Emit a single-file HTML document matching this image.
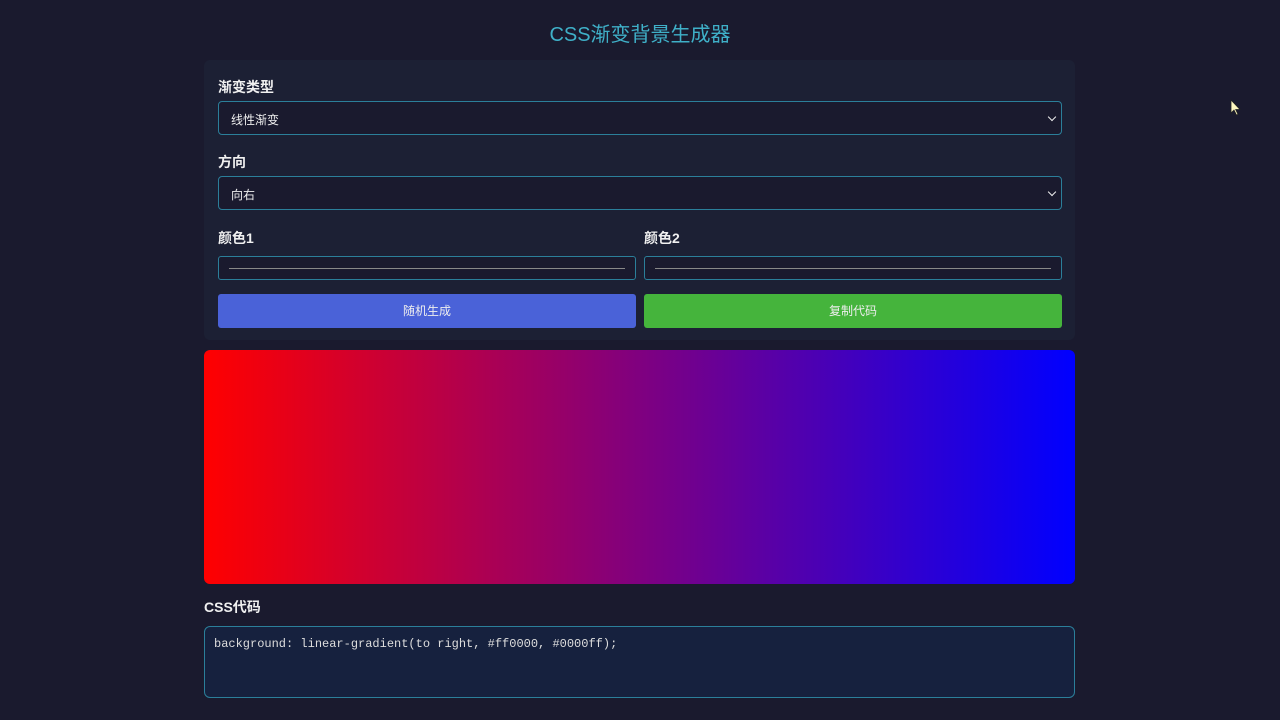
<!DOCTYPE html>
<html><head><meta charset="utf-8"><style>
*{box-sizing:border-box;margin:0;padding:0}
body{width:1280px;height:720px;background:#1a1a2e;font-family:"Liberation Sans","Noto Sans CJK SC",sans-serif;color:#e8e8e8;position:relative;overflow:hidden}
h1{position:absolute;top:18px;width:100%;text-align:center;font-size:20px;font-weight:normal;color:#3fb0c8}
.panel{position:absolute;left:204px;top:60px;width:871px;height:280px;background:#1c2034;border-radius:6px}
.lbl{position:absolute;font-size:14px;color:#f0f0f0;font-weight:bold}
.sel{position:absolute;left:218px;width:844px;height:34px;border:1px solid #2b7f9a;border-radius:4px;background:#1a1a2e;font-size:12px;padding:9px 12px;color:#eee}
.sel:after{content:"";position:absolute;right:6px;top:12px;width:5px;height:5px;border-right:1.5px solid #eee;border-bottom:1.5px solid #eee;transform:rotate(45deg)}
.ci{position:absolute;top:256px;width:418px;height:24px;border:1px solid #2b7f9a;border-radius:3px;background:#1a1a2e}
.ci:after{content:"";position:absolute;left:10px;right:10px;top:11px;height:1px;background:#888}
.btn{position:absolute;top:294px;width:418px;height:34px;border-radius:3px;font-size:12px;text-align:center;line-height:34px;color:#eee}
.prev{position:absolute;left:204px;top:350px;width:871px;height:234px;border-radius:6px;background:linear-gradient(to right,#ff0000,#0000ff)}
.code{position:absolute;left:204px;top:626px;width:871px;height:72px;border:1px solid #2b7f9a;border-radius:6px;background:#16213e;font-family:"Liberation Mono",monospace;font-size:12px;padding:10px 9px;color:#ddd}
</style></head><body>
<h1>CSS渐变背景生成器</h1>
<div class="panel"></div>
<div class="lbl" style="left:218px;top:77px">渐变类型</div>
<div class="sel" style="top:101px">线性渐变</div>
<div class="lbl" style="left:218px;top:152px">方向</div>
<div class="sel" style="top:176px">向右</div>
<div class="lbl" style="left:218px;top:228px">颜色1</div>
<div class="lbl" style="left:644px;top:228px">颜色2</div>
<div class="ci" style="left:218px"></div>
<div class="ci" style="left:644px"></div>
<div class="btn" style="left:218px;background:#4a62d8">随机生成</div>
<div class="btn" style="left:644px;background:#45b43c">复制代码</div>
<div class="prev"></div>
<div class="lbl" style="left:204px;top:597px">CSS代码</div>
<div class="code">background: linear-gradient(to right, #ff0000, #0000ff);</div>
<svg style="position:absolute;left:1230px;top:99px" width="12" height="18" viewBox="0 0 12 18"><path d="M1 1 L1 14 L4 11 L6.5 16 L8 15.3 L5.7 10.5 L10 10.5 Z" fill="#fff8c0" stroke="#222" stroke-width="0.8"/></svg>
</body></html>
